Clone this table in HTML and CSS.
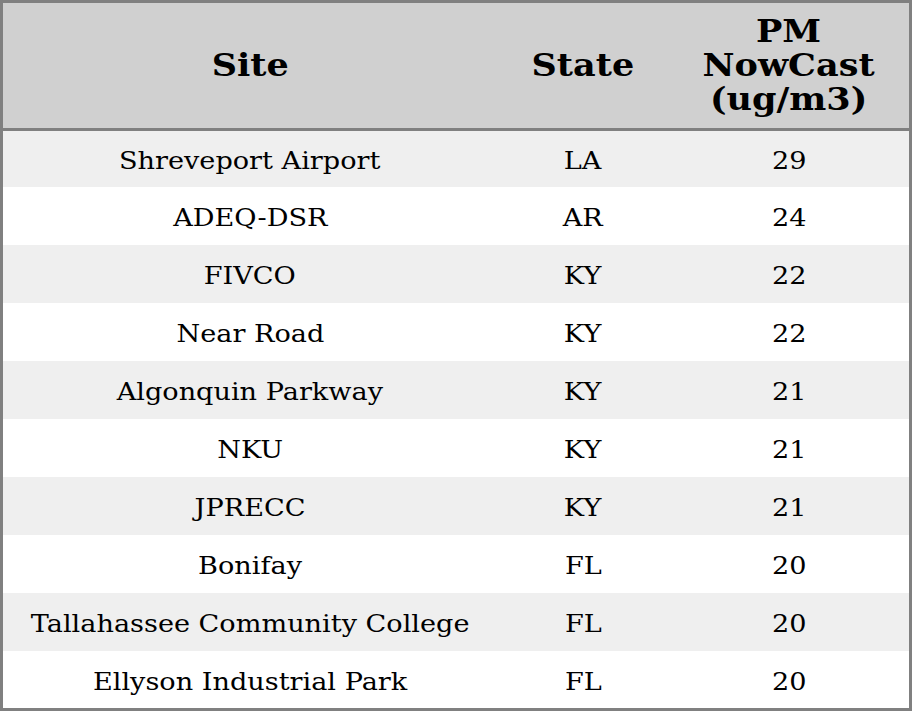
FILE: index.html
```html
<!DOCTYPE html>
<html>
<head>
<meta charset="utf-8">
<link rel="stylesheet" href="styles.css">
</head>
<body>
<div class="frame">
<table class="sites">
<colgroup><col class="c-site"><col class="c-state"><col class="c-pm"></colgroup>
<thead>
<tr><th><span class="t">Site</span></th><th><span class="t">State</span></th><th><span class="t">PM<br>NowCast<br>(ug/m3)</span></th></tr>
</thead>
<tbody>
<tr><td><span class="t">Shreveport Airport</span></td><td><span class="t">LA</span></td><td><span class="t">29</span></td></tr>
<tr><td><span class="t">ADEQ-DSR</span></td><td><span class="t">AR</span></td><td><span class="t">24</span></td></tr>
<tr><td><span class="t">FIVCO</span></td><td><span class="t">KY</span></td><td><span class="t">22</span></td></tr>
<tr><td><span class="t">Near Road</span></td><td><span class="t">KY</span></td><td><span class="t">22</span></td></tr>
<tr><td><span class="t">Algonquin Parkway</span></td><td><span class="t">KY</span></td><td><span class="t">21</span></td></tr>
<tr><td><span class="t">NKU</span></td><td><span class="t">KY</span></td><td><span class="t">21</span></td></tr>
<tr><td><span class="t">JPRECC</span></td><td><span class="t">KY</span></td><td><span class="t">21</span></td></tr>
<tr><td><span class="t">Bonifay</span></td><td><span class="t">FL</span></td><td><span class="t">20</span></td></tr>
<tr><td><span class="t">Tallahassee Community College</span></td><td><span class="t">FL</span></td><td><span class="t">20</span></td></tr>
<tr><td><span class="t">Ellyson Industrial Park</span></td><td><span class="t">FL</span></td><td><span class="t">20</span></td></tr>
</tbody>
</table>
</div>
</body>
</html>
```
FILE: styles.css
```css
html, body {
  margin: 0;
  padding: 0;
  background: #ffffff;
}
.frame {
  width: 906px;
  height: 705px;
  border: 3px solid #808080;
  overflow: hidden;
}
.sites {
  width: 906px;
  border-collapse: collapse;
  table-layout: fixed;
  font-family: "DejaVu Serif", serif;
  color: #000;
}
.c-site { width: 494px; }
.c-state { width: 172px; }
.c-pm { width: 240px; }
.t {
  display: inline-block;
  white-space: nowrap;
}
.sites th {
  background: #d0d0d0;
  height: 124px;
  padding: 0 0 1px 0;
  font-size: 32px;
  line-height: 34.3px;
  font-weight: bold;
  text-align: center;
  vertical-align: middle;
  border-bottom: 3px solid #808080;
}
.sites th .t {
  transform: scaleX(1.095);
}
.sites td {
  height: 58px;
  padding: 0;
  font-size: 24px;
  text-align: center;
  vertical-align: middle;
}
.sites tbody tr:first-child td {
  height: 56px;
}
.sites tbody tr:last-child td {
  height: 57px;
}
.sites td .t {
  transform: translateY(2px) scaleX(1.13);
}
.sites tbody tr:nth-child(odd) td {
  background: #efefef;
}
```
